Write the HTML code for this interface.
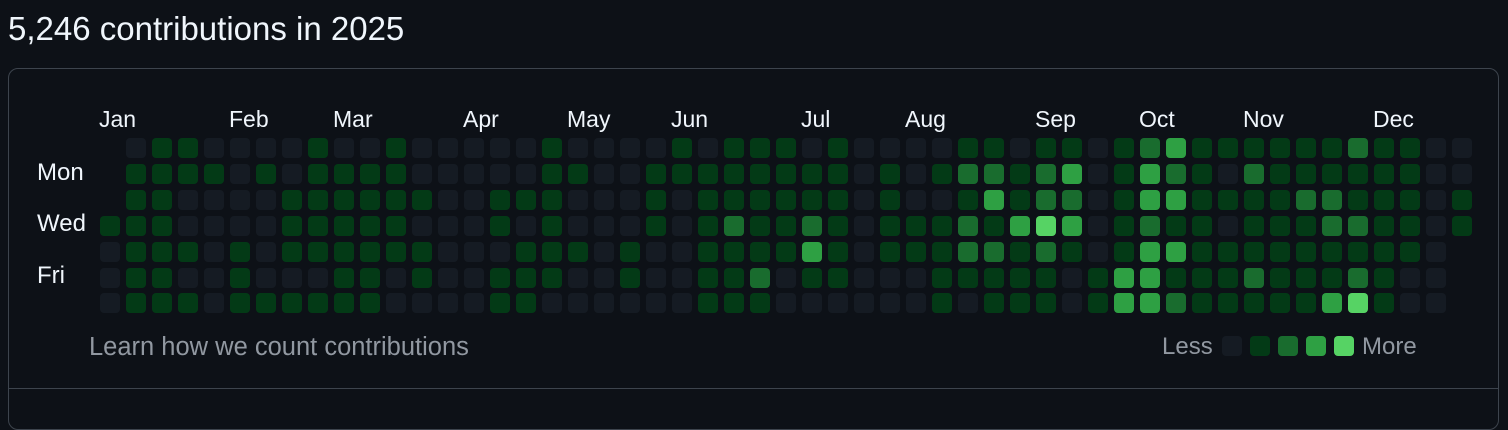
<!DOCTYPE html>
<html><head><meta charset="utf-8"><style>
html,body{margin:0;padding:0;background:#0d1117;width:1508px;height:402px;overflow:hidden;font-family:"Liberation Sans",sans-serif;color:#f0f6fc}
#t{position:absolute;left:8px;top:9px;font-size:33px;line-height:40px;white-space:nowrap}
#box{position:absolute;left:8px;top:68px;width:1489px;height:360px;border:1px solid #3d444d;border-radius:10px}
#hr{position:absolute;left:9px;top:388px;width:1489px;height:1px;background:#3d444d}
.l{position:absolute;font-size:23px;line-height:26px;white-space:nowrap}
.d{font-size:24px}
.c{position:absolute;width:20px;height:20px;border-radius:4px}
.g{color:#9198a1;font-size:24px}
</style></head><body>
<div id="t">5,246 contributions in 2025</div>
<div id="box"></div><div id="hr"></div>
<div id="g"></div>
<div class="l d" style="left:37px;top:160px">Mon</div>
<div class="l d" style="left:37px;top:211px">Wed</div>
<div class="l d" style="left:37px;top:263px">Fri</div>
<div class="l g" style="left:89px;top:334px;font-size:25.5px">Learn how we count contributions</div>
<div class="l g" style="left:1162px;top:334px">Less</div>
<div class="l g" style="left:1362px;top:334px">More</div>
<script>
var C=["#151b23","#033a16","#196c2e","#2ea043","#56d364"];
var R=[
"x"+"0110000100100"+"0001000010111"+"0100001101101"+"2311111121100",
"x"+"1111010111100"+"0001100111111"+"1101012212301"+"3210211111100",
"x"+"1100001111110"+"0111000101111"+"1101001312201"+"3311112211101",
"1"+"1100001111100"+"0101000101211"+"2101112134301"+"2110111221101",
"0"+"1110101111110"+"0011101001111"+"3101112212101"+"331111111110x",
"0"+"1100100011010"+"0111001001120"+"1100011111013"+"311121112100x",
"0"+"1110111111000"+"0110000001110"+"0000010111013"+"321111134100x"
];
var h="";
var months=[["Jan",99],["Feb",229],["Mar",333],["Apr",463],["May",567],["Jun",671],["Jul",801],["Aug",905],["Sep",1035],["Oct",1139],["Nov",1243],["Dec",1373]];
months.forEach(function(m){h+='<div class="l" style="left:'+m[1]+'px;top:106px">'+m[0]+'</div>'});
for(var r=0;r<7;r++){var s=R[r];for(var c=0;c<53&&c<s.length;c++){var ch=s[c];if(ch=="x")continue;
h+='<div class="c" style="left:'+(100+26*c)+'px;top:'+(138+Math.round(25.9*r))+'px;background:'+C[+ch]+'"></div>';}}
for(var i=0;i<5;i++)h+='<div class="c" style="left:'+(1222+28*i)+'px;top:336px;background:'+C[i]+'"></div>';
document.getElementById("g").innerHTML=h;
</script>
</body></html>
